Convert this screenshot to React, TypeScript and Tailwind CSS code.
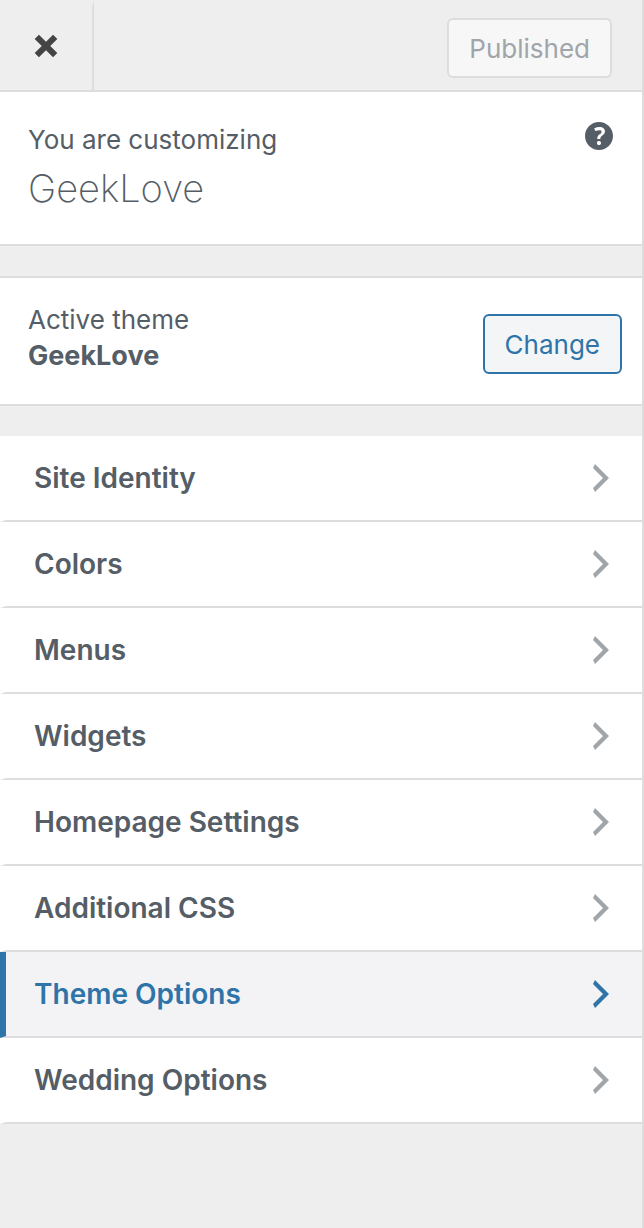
import React from "react";

const sections = [
  "Site Identity",
  "Colors",
  "Menus",
  "Widgets",
  "Homepage Settings",
  "Additional CSS",
  "Theme Options",
  "Wedding Options",
];

const paths = {
  close:
    "M12.12 10l3.53 3.53-2.12 2.12L10 12.12l-3.54 3.54-2.12-2.12L7.88 10 4.34 6.46l2.12-2.12L10 7.88l3.54-3.53 2.12 2.12z",
  arrow: "M6 15l5-5-5-5 1-2 7 7-7 7z",
  help: "M17 10c0-3.87-3.14-7-7-7-3.87 0-7 3.13-7 7s3.13 7 7 7c3.86 0 7-3.13 7-7zm-6.3 1.48H9.14v-.43c0-.38.08-.7.24-.98s.46-.57.88-.89c.41-.29.68-.53.81-.71.14-.18.2-.39.2-.62 0-.25-.09-.44-.28-.58-.19-.13-.45-.19-.79-.19-.58 0-1.25.15-2 .46l-.64-1.28c.87-.49 1.8-.74 2.77-.74.81 0 1.45.2 1.92.58.48.39.71.91.71 1.55 0 .43-.09.8-.29 1.11-.19.32-.57.67-1.11 1.06-.38.28-.61.49-.71.63-.1.15-.15.34-.15.57v.46zm-1.47 2.74c-.18-.17-.27-.42-.27-.73 0-.33.08-.58.26-.75s.43-.25.77-.25c.32 0 .57.09.75.26s.27.42.27.74c0 .3-.09.55-.27.72-.18.18-.43.27-.75.27-.33 0-.58-.09-.76-.26z",
};

function Icon({ name, className = "" }: { name: keyof typeof paths; className?: string }) {
  return (
    <svg viewBox="0 0 20 20" className={`size-10 shrink-0 fill-current ${className}`} aria-hidden="true">
      <path d={paths[name]} />
    </svg>
  );
}

function Section({ title, active }: { title: string; active: boolean }) {
  const tone = active
    ? "border-l-[#2e74a8] bg-[#f3f3f5] text-[#2e74a8]"
    : "border-l-transparent bg-white bg-clip-padding text-[#555d66]";
  return (
    <li className="bg-white">
      <button
        type="button"
        className={`flex w-full items-center justify-between border-b-2 border-l-6 border-b-[#ddd] py-[22px] pr-[21px] pl-7 text-left text-[28px] leading-10 font-semibold ${tone}`}
      >
        {title}
        <Icon name="arrow" className={active ? "" : "text-[#a0a5aa]"} />
      </button>
    </li>
  );
}

export default function App() {
  return (
    <main className="min-h-screen border-r-2 border-[#ddd] bg-[#eee] font-['Inter','Liberation_Sans',sans-serif] text-[26px] leading-9 text-[#555d66]">
      <header className="flex items-stretch justify-between border-b-2 border-[#ddd]">
        <button
          type="button"
          aria-label="Close"
          className="flex items-center border-t-8 border-r-2 border-t-transparent border-r-[#ddd] px-[26px] pb-1.5 text-[#444]"
        >
          <Icon name="close" />
        </button>
        <button
          type="button"
          disabled
          className="mt-[18px] mr-[30px] mb-3 h-15 rounded-md border-2 border-[#ddd] bg-[#f7f7f7] px-5 pt-0.5 text-[#a0a5aa]"
        >
          Published
        </button>
      </header>

      <section className="flex items-start justify-between border-b-2 border-[#ddd] bg-white pt-6 pr-[23px] pb-[30px] pl-7">
        <div className="pt-1.5">
          <p>You are customizing</p>
          <h1 className="pt-1 text-[38px] leading-[52px] font-extralight">GeekLove</h1>
        </div>
        <button type="button" aria-label="Help">
          <Icon name="help" />
        </button>
      </section>

      <section className="my-[30px] flex items-center justify-between border-y-2 border-[#ddd] bg-white pt-6 pr-5 pb-[18px] pl-7">
        <div className="pb-3">
          <p>Active theme</p>
          <h2 className="text-[27px] font-bold">GeekLove</h2>
        </div>
        <button
          type="button"
          className="h-15 rounded-md border-2 border-[#2e74a8] bg-[#f3f5f6] px-5 pt-0.5 text-[#2e74a8]"
        >
          Change
        </button>
      </section>

      <ul>
        {sections.map((title) => (
          <Section key={title} title={title} active={title === "Theme Options"} />
        ))}
      </ul>
    </main>
  );
}
